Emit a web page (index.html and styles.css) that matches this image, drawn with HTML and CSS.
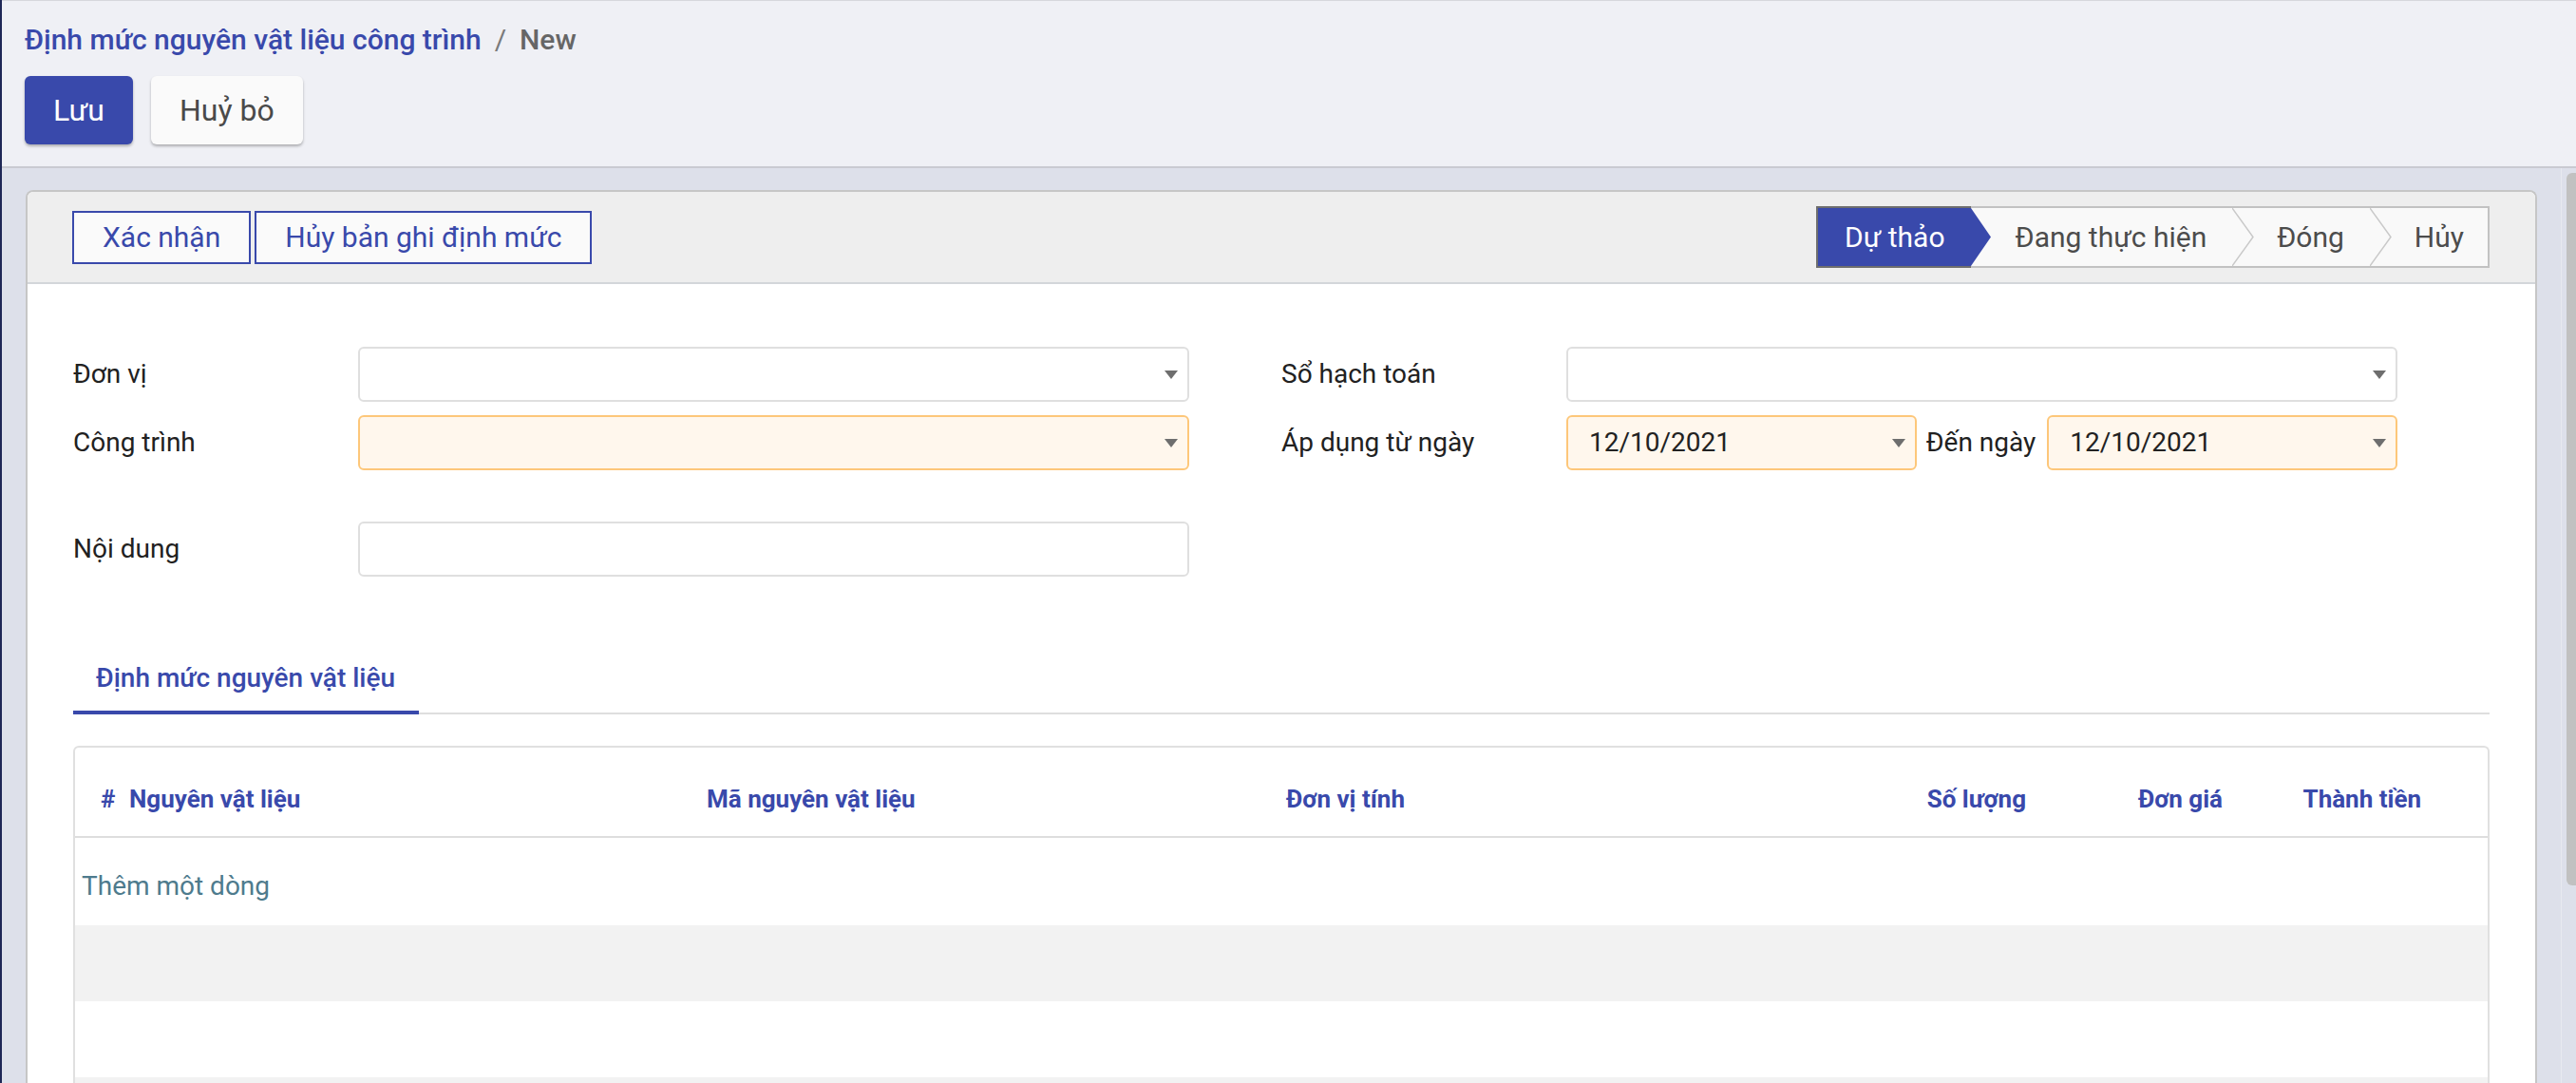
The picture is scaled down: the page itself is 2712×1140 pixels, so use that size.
FILE: index.html
```html
<!DOCTYPE html>
<html lang="vi">
<head>
<meta charset="utf-8">
<title>Định mức nguyên vật liệu công trình</title>
<link rel="stylesheet" href="styles.css">
</head>
<body>
<div class="app">
  <header class="control-panel">
    <div class="breadcrumb">
      <a class="bc-link">Định mức nguyên vật liệu công trình</a>
      <span class="bc-sep">/</span>
      <span class="bc-active">New</span>
    </div>
    <div class="cp-buttons">
      <button class="btn btn-primary">Lưu</button>
      <button class="btn btn-secondary">Huỷ bỏ</button>
    </div>
  </header>
  <div class="content-row">
    <main class="content">
      <div class="card">
        <div class="statusbar">
          <div class="sb-buttons">
            <button class="sb-btn">Xác nhận</button>
            <button class="sb-btn">Hủy bản ghi định mức</button>
          </div>
          <div class="steps">
            <div class="step active">Dự thảo</div>
            <div class="sep"><svg width="23" height="61" viewBox="0 0 23 61"><polygon points="0,0 21,30.5 0,61" fill="#3949ab"/></svg></div>
            <div class="step">Đang thực hiện</div>
            <div class="sep"><svg width="23" height="61" viewBox="0 0 23 61"><polyline points="0,0 22,30.5 0,61" fill="none" stroke="#c9c9c9" stroke-width="1.5"/></svg></div>
            <div class="step">Đóng</div>
            <div class="sep"><svg width="23" height="61" viewBox="0 0 23 61"><polyline points="0,0 22,30.5 0,61" fill="none" stroke="#c9c9c9" stroke-width="1.5"/></svg></div>
            <div class="step last">Hủy</div>
          </div>
        </div>
        <div class="sheet">
          <div class="groups">
            <div class="group">
              <div class="field-row">
                <label class="f-label">Đơn vị</label>
                <div class="input"><span class="value"></span><span class="caret"></span></div>
              </div>
              <div class="field-row">
                <label class="f-label">Công trình</label>
                <div class="input required"><span class="value"></span><span class="caret"></span></div>
              </div>
            </div>
            <div class="group">
              <div class="field-row">
                <label class="f-label">Sổ hạch toán</label>
                <div class="input"><span class="value"></span><span class="caret"></span></div>
              </div>
              <div class="field-row">
                <label class="f-label">Áp dụng từ ngày</label>
                <div class="date-range">
                  <div class="input required"><span class="value">12/10/2021</span><span class="caret"></span></div>
                  <span class="inline-label">Đến ngày</span>
                  <div class="input required"><span class="value">12/10/2021</span><span class="caret"></span></div>
                </div>
              </div>
            </div>
          </div>
          <div class="group single">
            <div class="field-row">
              <label class="f-label">Nội dung</label>
              <div class="input"><span class="value"></span></div>
            </div>
          </div>
          <div class="tabs">
            <a class="tab active">Định mức nguyên vật liệu</a>
          </div>
          <div class="table">
            <div class="t-row t-head">
              <div class="c c-num">#</div>
              <div class="c">Nguyên vật liệu</div>
              <div class="c">Mã nguyên vật liệu</div>
              <div class="c">Đơn vị tính</div>
              <div class="c num">Số lượng</div>
              <div class="c num">Đơn giá</div>
              <div class="c num">Thành tiền</div>
              <div class="c"></div>
            </div>
            <div class="t-add"><a class="add-line">Thêm một dòng</a></div>
            <div class="t-empty gray"></div>
            <div class="t-empty"></div>
            <div class="t-empty gray"></div>
          </div>
        </div>
      </div>
    </main>
    <div class="scrollbar"><div class="thumb"></div></div>
  </div>
</div>
</body>
</html>
```

FILE: styles.css
```css
* { box-sizing: border-box; }
html, body { margin: 0; padding: 0; }
body {
  font-family: Roboto, "Noto Sans", "Liberation Sans", sans-serif;
  color: #212529;
  background: #dde0ea;
}
.app {
  height: 100vh;
  display: flex;
  flex-direction: column;
  border-left: 2px solid #1e2756;
  overflow: hidden;
  background: #dde0ea;
}

/* control panel */
.control-panel {
  background: #eff0f5;
  border-top: 1px solid #d6d7dc;
  border-bottom: 2px solid #c9cad1;
  padding: 23px 24px 23px 24px;
  flex: none;
}
.breadcrumb {
  display: flex;
  align-items: baseline;
  font-size: 30px;
  line-height: 36px;
  font-weight: 500;
}
.bc-link { color: #3949ab; }
.bc-sep { color: #7a7a7a; padding: 0 14px; font-weight: 400; }
.bc-active { color: #666666; }
.cp-buttons {
  display: flex;
  gap: 19px;
  margin-top: 20px;
}
.btn {
  font-family: inherit;
  font-size: 32px;
  height: 72px;
  padding: 0 30px;
  border: 0;
  border-radius: 6px;
  box-shadow: 0 2px 3px rgba(0, 0, 0, 0.28);
}
.btn-primary { background: #3949ab; color: #ffffff; }
.btn-secondary { background: #fafafa; color: #4a4a4a; }

/* content */
.content-row {
  flex: 1;
  display: flex;
  min-height: 0;
}
.content {
  flex: 1;
  padding: 23px 25px 0 25px;
  overflow: hidden;
}
.scrollbar {
  width: 16px;
  flex: none;
  background: #dde0ea;
  border-left: 1px solid #e8e9f0;
  padding: 5px 0 0 5px;
}
.thumb {
  height: 750px;
  background: #c1c1c1;
  border-radius: 6px 0 0 6px;
}

.card {
  background: #ffffff;
  border: 2px solid #c6c6c6;
  border-bottom: 0;
  border-radius: 8px 8px 0 0;
  min-height: 1000px;
}

/* statusbar */
.statusbar {
  display: flex;
  justify-content: space-between;
  align-items: center;
  height: 97px;
  padding: 0 48px 0 47px;
  background: #eeeeee;
  border-bottom: 2px solid #d3d6da;
  border-radius: 6px 6px 0 0;
}
.sb-buttons { display: flex; gap: 4px; }
.sb-btn {
  font-family: inherit;
  font-size: 30px;
  height: 56px;
  padding: 0 30px;
  background: #fafafa;
  color: #3949ab;
  border: 2px solid #3949ab;
  border-radius: 0;
}
.steps {
  display: flex;
  height: 65px;
}
.step {
  display: flex;
  align-items: center;
  font-size: 30px;
  color: #4c4c4c;
  background: #f9f9f9;
  border-top: 2px solid #c2c2c2;
  border-bottom: 2px solid #c2c2c2;
  padding: 0 27px 0 24px;
  white-space: nowrap;
}
.step.active {
  background: #3949ab;
  color: #ffffff;
  border: 2px solid #6e6e6e;
  border-right: 0;
  padding: 0 27px 0 28px;
}
.step.last {
  border-right: 2px solid #c2c2c2;
  padding-right: 25px;
}
.sep {
  width: 23px;
  background: #f9f9f9;
  border-top: 2px solid #c2c2c2;
  border-bottom: 2px solid #c2c2c2;
}
.sep svg { display: block; }

/* sheet */
.sheet {
  padding: 66px 48px 0 48px;
}
.groups {
  display: grid;
  grid-template-columns: 1fr 1fr;
}
.group {
  padding-right: 97px;
  display: flex;
  flex-direction: column;
  gap: 14px;
}
.group.single {
  width: 50%;
  margin-top: 54px;
}
.field-row {
  display: grid;
  grid-template-columns: 300px 1fr;
  align-items: center;
  height: 58px;
}
.f-label {
  font-size: 28px;
  line-height: 32px;
  color: #212121;
}
.input {
  height: 58px;
  display: flex;
  align-items: center;
  padding: 0 10px 0 22px;
  border: 2px solid #dfdfdf;
  border-radius: 6px;
  background: #ffffff;
  font-size: 28px;
  line-height: 32px;
  color: #222222;
}
.input.required {
  background: #fff7ed;
  border-color: #fdc77a;
}
.value { flex: 1; }
.caret {
  width: 0;
  height: 0;
  border-left: 7px solid transparent;
  border-right: 7px solid transparent;
  border-top: 9px solid #6e6e6e;
}
.date-range {
  display: flex;
  align-items: center;
}
.date-range .input { flex: 1; }
.inline-label {
  font-size: 28px;
  line-height: 32px;
  color: #212121;
  margin: 0 12px 0 10px;
  white-space: nowrap;
}

/* tabs */
.tabs {
  display: flex;
  margin-top: 72px;
  border-bottom: 2px solid #dedede;
}
.tab {
  font-size: 28px;
  line-height: 30px;
  font-weight: 500;
  color: #3949ab;
  padding: 20px 25px 19px 24px;
  border-bottom: 4px solid #3949ab;
  margin-bottom: -2px;
}

/* table */
.table {
  margin-top: 33px;
  border: 2px solid #e0e0e0;
  border-bottom: 0;
  border-radius: 6px 6px 0 0;
}
.t-row {
  display: grid;
  grid-template-columns: 45px 608px 610px 600px 199px 207px 209px 1fr;
}
.t-head {
  border-bottom: 2px solid #dedede;
}
.t-head .c {
  font-size: 26px;
  line-height: 30px;
  font-weight: 700;
  color: #3949ab;
  padding: 39px 0 24px 12px;
  white-space: nowrap;
}
.t-head .c.c-num { padding-left: 27px; }
.t-head .c.num { text-align: right; padding-left: 0; padding-right: 8px; }
.t-add {
  padding: 35px 0 25px 7px;
}
.add-line {
  font-size: 28px;
  line-height: 32px;
  color: #4e7b8d;
}
.t-empty { height: 80px; background: #ffffff; }
.t-empty.gray { background: #f2f2f2; }
```
